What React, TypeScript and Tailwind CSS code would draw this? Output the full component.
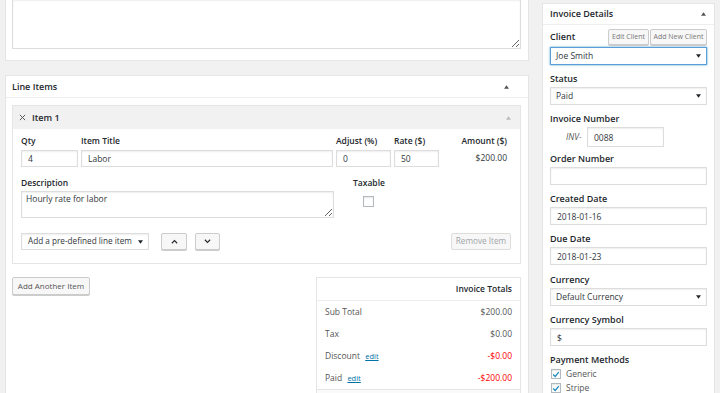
import React from 'react';

const Caret = ({ className = '' }: { className?: string }) => (
  <svg viewBox="0 0 6 4" className={`w-[5px] h-[4px] ${className}`}>
    <path d="M0 4 L3 0 L6 4 Z" fill="currentColor" />
  </svg>
);

const Down = () => (
  <svg viewBox="0 0 6 4" className="w-[5px] h-[4px] text-[#23282d] shrink-0">
    <path d="M0 0 L6 0 L3 4 Z" fill="currentColor" />
  </svg>
);

const Check = () => (
  <span className="w-[10px] h-[10px] border border-[#b4b9be] bg-white flex items-center justify-center shadow-[inset_0_1px_2px_rgba(0,0,0,0.1)]">
    <svg viewBox="0 0 10 10" className="w-[9px] h-[9px]">
      <path d="M1.5 5 L4 7.5 L8.5 2" stroke="#1e8cbe" strokeWidth="1.6" fill="none" />
    </svg>
  </span>
);

const Field = ({ label, children, className = 'mt-[8px]' }: { label: string; children: React.ReactNode; className?: string }) => (
  <div className={className}>
    <div className="font-semibold text-[#23282d] leading-[12px] text-[9px]">{label}</div>
    <div className="mt-[2px]">{children}</div>
  </div>
);

const Input = ({ value, className = 'h-[18px] w-full' }: { value: string; className?: string }) => (
  <input
    readOnly
    value={value}
    className={`block border border-[#ddd] bg-white px-[6px] text-[8.5px] text-[#32373c] shadow-[inset_0_1px_2px_rgba(0,0,0,0.07)] outline-none ${className}`}
  />
);

const Select = ({ value, focus = false }: { value: string; focus?: boolean }) => (
  <div
    className={`h-[18px] flex items-center justify-between pl-[5px] pr-[5px] bg-white border ${focus ? 'border-[#5b9dd9] shadow-[0_0_2px_rgba(30,140,190,0.8)]' : 'border-[#ddd] shadow-[inset_0_1px_2px_rgba(0,0,0,0.07)]'}`}
  >
    <span className="text-[#32373c]">{value}</span>
    <Down />
  </div>
);

const Btn = ({ children, className = '' }: { children: React.ReactNode; className?: string }) => (
  <button className={`bg-[#f7f7f7] border border-[#ccc] rounded-[2px] text-[#555] shadow-[0_1px_0_#ccc] flex items-center justify-center ${className}`}>
    {children}
  </button>
);

export default function App() {
  return (
    <div className="w-[720px] h-[393px] overflow-hidden bg-[#f1f1f1] flex pl-[5px] gap-[13px] font-['Open_Sans',sans-serif] text-[8.5px] text-[#32373c]">
      {/* main column */}
      <div className="w-[524px] flex flex-col gap-[14px] shrink-0">
        <div className="h-[61px] bg-white border-x border-b border-[#e5e5e5] pl-[6px] pr-[7px] shrink-0">
          <textarea readOnly className="block w-full h-[49px] border border-t-0 border-[#ddd] shadow-[inset_0_1px_2px_rgba(0,0,0,0.07)] outline-none resize-y" />
        </div>

        <div className="flex-1 bg-white border border-b-0 border-[#e5e5e5]">
          <div className="h-[22px] flex items-center justify-between pl-[6px] pr-[19px] border-b border-[#eee]">
            <span className="font-semibold text-[#23282d] text-[9px]">Line Items</span>
            <Caret className="text-[#555]" />
          </div>

          {/* item */}
          <div className="mt-[7px] ml-[6px] mr-[7px] border border-[#e5e5e5]">
            <div className="h-[23px] bg-[#f1f1f1] flex items-center pl-[6px] pr-[9px]">
              <svg viewBox="0 0 8 8" className="w-[7px] h-[7px]">
                <path d="M1 1 L7 7 M7 1 L1 7" stroke="#555" strokeWidth="1.1" />
              </svg>
              <span className="ml-[6px] font-semibold text-[#23282d] text-[9px]">Item 1</span>
              <Caret className="ml-auto text-[#bbb]" />
            </div>

            <div className="pl-[8px] pr-[9px] pt-[6px] pb-[13px]">
              <div className="grid grid-cols-[57px_252px_55px_45px_1fr] gap-x-[3px] gap-y-[3px] items-center">
                <div className="font-semibold text-[#23282d] leading-[12px]">Qty</div>
                <div className="font-semibold text-[#23282d] leading-[12px]">Item Title</div>
                <div className="font-semibold text-[#23282d] leading-[12px]">Adjust (%)</div>
                <div className="font-semibold text-[#23282d] leading-[12px]">Rate ($)</div>
                <div className="font-semibold text-[#23282d] leading-[12px] text-right pr-[4px]">Amount ($)</div>
                <Input value="4" className="h-[17px] w-full" />
                <Input value="Labor" className="h-[17px] w-full" />
                <Input value="0" className="h-[17px] w-full" />
                <Input value="50" className="h-[17px] w-full" />
                <div className="text-right pr-[4px]">$200.00</div>
              </div>

              <div className="flex mt-[10px]">
                <div className="w-[313px]">
                  <div className="font-semibold text-[#23282d] leading-[12px]">Description</div>
                  <textarea
                    readOnly
                    value="Hourly rate for labor"
                    className="block mt-[2px] w-full h-[27px] border border-[#ddd] px-[4px] py-[1px] leading-[12px] text-[8.5px] shadow-[inset_0_1px_2px_rgba(0,0,0,0.07)] outline-none resize-y"
                  />
                </div>
                <div className="ml-[19px] flex flex-col items-center">
                  <div className="font-semibold text-[#23282d] leading-[12px]">Taxable</div>
                  <span className="mt-[7px] w-[11px] h-[11px] border border-[#b4b9be] shadow-[inset_0_1px_2px_rgba(0,0,0,0.1)]" />
                </div>
              </div>

              <div className="flex items-center mt-[15px]">
                <div className="w-[128px] h-[17px] flex items-center justify-between pl-[6px] pr-[5px] border border-[#ddd] shadow-[inset_0_1px_2px_rgba(0,0,0,0.07)] text-[8.2px]">
                  <span className="whitespace-nowrap">Add a pre-defined line item</span>
                  <Down />
                </div>
                <Btn className="ml-[12px] w-[26px] h-[17px]">
                  <svg viewBox="0 0 8 5" className="w-[7px] h-[5px]">
                    <path d="M1 4.5 L4 1.5 L7 4.5" stroke="#23282d" strokeWidth="1.3" fill="none" />
                  </svg>
                </Btn>
                <Btn className="ml-[8px] w-[25px] h-[17px]">
                  <svg viewBox="0 0 8 5" className="w-[7px] h-[5px]">
                    <path d="M1 0.5 L4 3.5 L7 0.5" stroke="#23282d" strokeWidth="1.3" fill="none" />
                  </svg>
                </Btn>
                <button className="ml-auto w-[60px] h-[17px] border border-[#ddd] bg-[#f7f7f7] rounded-[2px] text-[#a0a5aa] text-[8.2px]">
                  Remove Item
                </button>
              </div>
            </div>
          </div>

          <div className="mt-[13px] ml-[6px] mr-[7px] flex justify-between items-start">
            <Btn className="w-[78px] h-[18px] text-[8px]">Add Another Item</Btn>
            <div className="w-[205px] border border-[#e5e5e5]">
              <div className="h-[23px] flex items-center justify-end px-[8px] border-b border-[#eee] font-semibold text-[#23282d]">
                Invoice Totals
              </div>
              <div className="h-[22px] flex items-center justify-between px-[8px] text-[#555]">
                <span>Sub Total</span>
                <span>$200.00</span>
              </div>
              <div className="h-[22px] flex items-center justify-between px-[8px] text-[#555]">
                <span>Tax</span>
                <span>$0.00</span>
              </div>
              <div className="h-[23px] flex items-center justify-between px-[8px] text-[#555]">
                <span>
                  Discount <a className="ml-[3px] text-[7.5px] text-[#0073aa] underline">edit</a>
                </span>
                <span className="text-[#f00]">-$0.00</span>
              </div>
              <div className="h-[22px] flex items-center justify-between px-[8px] text-[#555] border-b border-[#e5e5e5]">
                <span>
                  Paid <a className="ml-[3px] text-[7.5px] text-[#0073aa] underline">edit</a>
                </span>
                <span className="text-[#f00]">-$200.00</span>
              </div>
              <div className="h-[20px] bg-[#fafafa]" />
            </div>
          </div>
        </div>
      </div>

      {/* sidebar */}
      <div className="w-[173px] pt-[3px] shrink-0">
        <div className="h-[400px] bg-white border border-[#e5e5e5]">
          <div className="h-[21px] flex items-center justify-between pl-[7px] pr-[8px] border-b border-[#eee]">
            <span className="font-semibold text-[#23282d] text-[9px]">Invoice Details</span>
            <Caret className="text-[#555]" />
          </div>
          <div className="px-[7px]">
            <div className="mt-[4px] h-[16px] flex items-center">
              <span className="font-semibold text-[#23282d] text-[9px]">Client</span>
              <Btn className="ml-auto w-[41px] h-[16px] text-[7px] text-[#777]">Edit Client</Btn>
              <Btn className="ml-[1px] w-[57px] h-[16px] text-[7px] text-[#777]">Add New Client</Btn>
            </div>
            <div className="mt-[2px]">
              <Select value="Joe Smith" focus />
            </div>

            <Field label="Status">
              <Select value="Paid" />
            </Field>

            <Field label="Invoice Number">
              <div className="flex items-center pl-[16px]">
                <span className="italic text-[#555] w-[21px]">INV-</span>
                <Input value="0088" className="w-[77px] h-[20px] px-[3px]" />
              </div>
            </Field>

            <Field label="Order Number" className="mt-[6px]">
              <Input value="" />
            </Field>

            <Field label="Created Date">
              <Input value="2018-01-16" />
            </Field>

            <Field label="Due Date">
              <Input value="2018-01-23" />
            </Field>

            <Field label="Currency" className="mt-[9px]">
              <Select value="Default Currency" />
            </Field>

            <Field label="Currency Symbol">
              <Input value="$" />
            </Field>

            <Field label="Payment Methods">
              <div className="-mt-[1px]">
                <div className="flex items-center gap-[5px] h-[14px] pl-[1px]">
                  <Check />
                  <span className="text-[#555]">Generic</span>
                </div>
                <div className="flex items-center gap-[5px] h-[14px] pl-[1px]">
                  <Check />
                  <span className="text-[#555]">Stripe</span>
                </div>
              </div>
            </Field>
          </div>
        </div>
      </div>
    </div>
  );
}
